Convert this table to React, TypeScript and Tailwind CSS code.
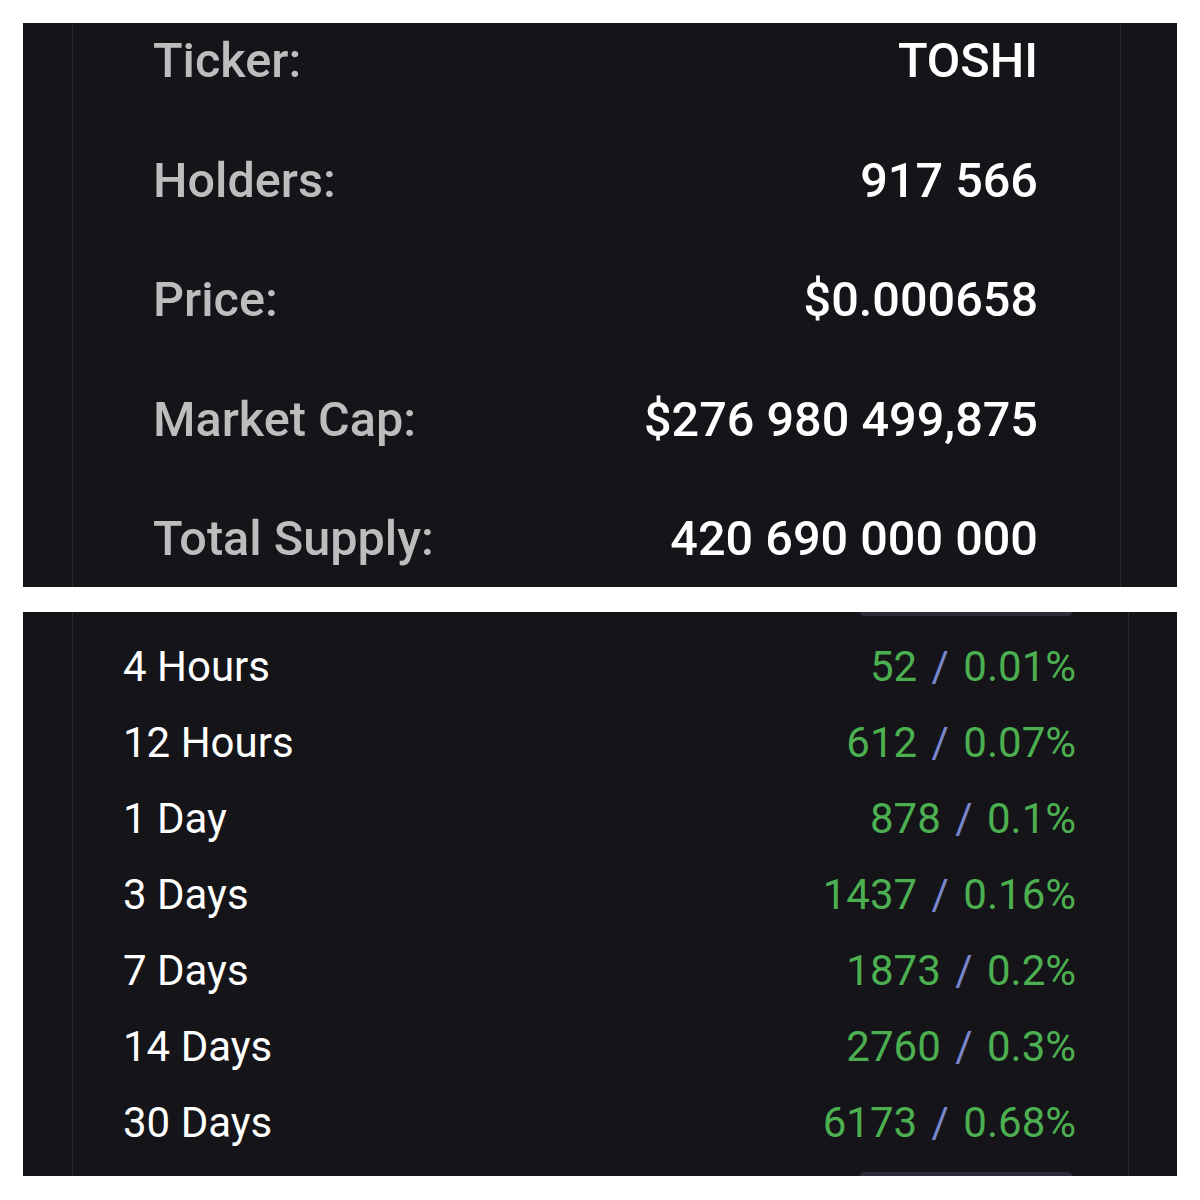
import React from "react";

const info = [
  { label: "Ticker:", value: "TOSHI" },
  { label: "Holders:", value: "917 566" },
  { label: "Price:", value: "$0.000658" },
  { label: "Market Cap:", value: "$276 980 499,875" },
  { label: "Total Supply:", value: "420 690 000 000" },
];

const changes = [
  { period: "4 Hours", count: "52", pct: "0.01%" },
  { period: "12 Hours", count: "612", pct: "0.07%" },
  { period: "1 Day", count: "878", pct: "0.1%" },
  { period: "3 Days", count: "1437", pct: "0.16%" },
  { period: "7 Days", count: "1873", pct: "0.2%" },
  { period: "14 Days", count: "2760", pct: "0.3%" },
  { period: "30 Days", count: "6173", pct: "0.68%" },
];

const App = () => {
  return (
    <div className="w-[1200px] h-[1200px] bg-white p-[23px] flex flex-col gap-[25px] font-['Roboto',sans-serif]">
      {/* token info */}
      <div className="h-[564px] bg-[#141419] overflow-hidden pl-[49px] pr-[56px]">
        <div className="h-[585px] border-x border-[#2a2a33] -mt-[21px] pl-[80px] pr-[82px] flex flex-col">
          {info.map((row) => (
            <div key={row.label} className="h-[119.5px] shrink-0 flex items-center justify-between text-[48.6px] font-medium">
              <span className="text-[#bdbdbd]">{row.label}</span>
              <span className="text-white">{row.value}</span>
            </div>
          ))}
        </div>
      </div>

      {/* holder changes */}
      <div className="relative h-[564px] bg-[#141419] overflow-hidden pl-[49px] pr-[48px]">
        <div className="absolute top-0 left-[837px] w-[212px] h-[4px] rounded-b-md bg-[#2a2c38]"></div>
        <div className="absolute bottom-0 left-[837px] w-[212px] h-[4px] rounded-t-md bg-[#2a2c38]"></div>
        <div className="h-full border-x border-[#2a2a33] py-[16px] pl-[50px] pr-[52px] flex flex-col">
          {changes.map((row) => (
            <div key={row.period} className="h-[76px] shrink-0 flex items-center justify-between text-[42px]">
              <span className="text-white">{row.period}</span>
              <span className="text-[#4caf50]">
                {row.count} <span className="mx-[4px] text-[#7986cb]">/</span> {row.pct}
              </span>
            </div>
          ))}
        </div>
      </div>
    </div>
  );
};

export default App;
